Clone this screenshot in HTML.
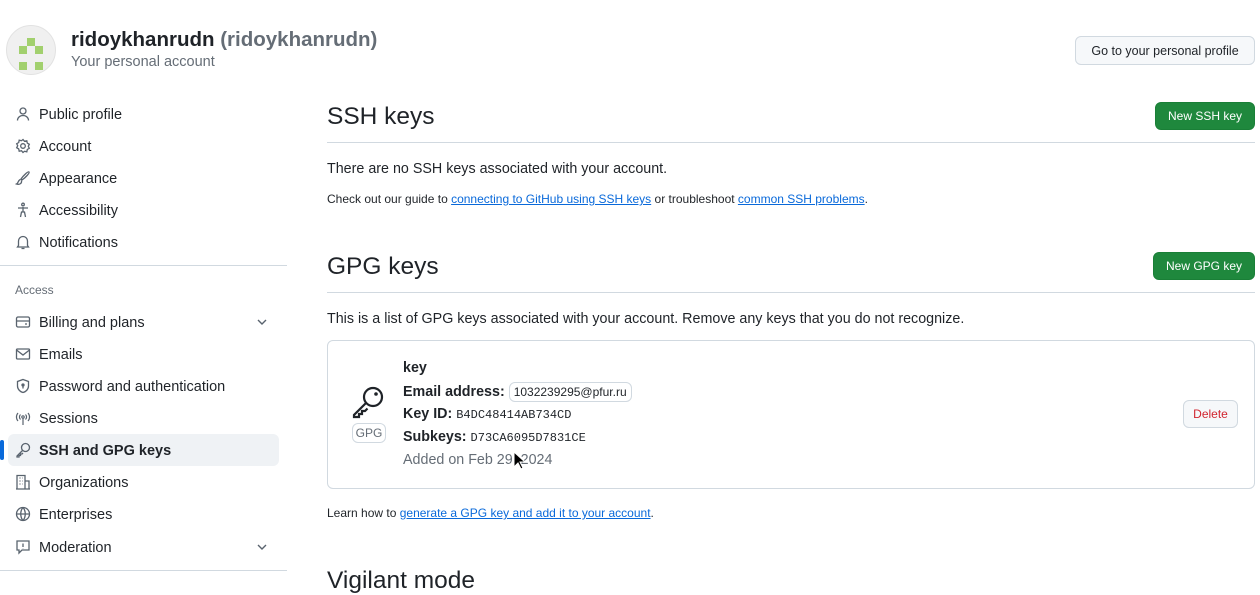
<!DOCTYPE html>
<html><head><meta charset="utf-8"><style>
*{box-sizing:border-box;margin:0;padding:0}
body{width:1260px;height:591px;overflow:hidden;background:#fff;font-family:"Liberation Sans",sans-serif;color:#1f2328;position:relative}
.a{position:absolute;white-space:nowrap}
.nav{position:absolute;left:8px;width:271px;height:32px;font-size:14.5px;display:flex;align-items:center;padding-left:31px;padding-top:1px;border-radius:6px}
.nav svg{position:absolute;left:7px;top:8px}
.nav svg.chev{left:auto;right:10px;top:9px}
a{color:#0969da;text-decoration:underline}
.btn{position:absolute;border-radius:6px;font-size:12px;display:flex;align-items:center;justify-content:center}
.green{background:#1f883d;color:#fff;border:1px solid #1a7f37}
h2{position:absolute;font-weight:400;font-size:24.5px;white-space:nowrap}
.hr{position:absolute;left:327px;width:928px;height:1px;background:#d1d9e0}
.mono{font-family:"Liberation Mono",monospace;font-size:12px;font-weight:400}
</style></head><body>
<div class="a" style="left:6px;top:25px;width:50px;height:50px;border-radius:50%;background:#f0f0f0;border:1px solid #e2e2e2">
<svg width="50" height="50" style="position:absolute;left:-1px;top:-1px"><g fill="#a2d06e"><rect x="21" y="13" width="8" height="8"/><rect x="13" y="21" width="8" height="8"/><rect x="29" y="21" width="8" height="8"/><rect x="13" y="37" width="8" height="8"/><rect x="29" y="37" width="8" height="8"/></g></svg></div>
<div class="a" style="left:71px;top:28px;font-size:20.5px;font-weight:700">ridoykhanrudn <span style="color:#656d76;font-weight:600">(ridoykhanrudn)</span></div>
<div class="a" style="left:71px;top:54px;font-size:14.5px;color:#656d76">Your personal account</div>
<div class="btn" style="left:1075px;top:36px;width:180px;height:29px;background:#f6f8fa;border:1px solid #d1d9e0;font-size:12.5px">Go to your personal profile</div>

<div class="nav" style="top:98px"><svg width="16" height="16" fill="none" stroke="#59636e" stroke-width="1.3"><circle cx="8" cy="5" r="3"/><path d="M2.5 14.5c0-3 2.5-5 5.5-5s5.5 2 5.5 5"/></svg>Public profile</div>
<div class="nav" style="top:130px"><svg width="16" height="16" fill="none" stroke="#59636e" stroke-width="1.3"><circle cx="8" cy="8" r="2.3"/><path d="M8 1.5l1.5 1.8 2.3-.5.5 2.3 2 1.2-1 2 1 2-2 1.2-.5 2.3-2.3-.5L8 14.5l-1.5-1.8-2.3.5-.5-2.3-2-1.2 1-2-1-2 2-1.2.5-2.3 2.3.5z"/></svg>Account</div>
<div class="nav" style="top:162px"><svg width="16" height="16" fill="none" stroke="#59636e" stroke-width="1.3"><path d="M14 2c-1-1-6 4-8 7l1 1c3-2 8-7 7-8zM5.5 9.5C3 10 3.5 13 1.5 14c3 1 5.5-.5 5-3.5"/></svg>Appearance</div>
<div class="nav" style="top:194px"><svg width="16" height="16" fill="none" stroke="#59636e" stroke-width="1.3"><circle cx="8" cy="2.5" r="1.3"/><path d="M3 6h10M8 5v5M5.5 15l1-5h3l1 5"/></svg>Accessibility</div>
<div class="nav" style="top:226px"><svg width="16" height="16" fill="none" stroke="#59636e" stroke-width="1.3"><path d="M3.5 11.5V7a4.5 4.5 0 019 0v4.5l1 1.5h-11zM6.5 14.5h3"/></svg>Notifications</div>
<div class="a" style="left:0;top:265px;width:287px;height:1px;background:#d1d9e0"></div>
<div class="a" style="left:15px;top:283px;font-size:12px;color:#656d76">Access</div>
<div class="nav" style="top:306px"><svg width="16" height="16" fill="none" stroke="#59636e" stroke-width="1.3"><rect x="1.5" y="3" width="13" height="10" rx="1.5"/><path d="M1.5 7h13M10 10h2"/></svg>Billing and plans<svg class="chev" width="14" height="14" fill="none" stroke="#59636e" stroke-width="1.4"><path d="M3 5l4 4 4-4"/></svg></div>
<div class="nav" style="top:338px"><svg width="16" height="16" fill="none" stroke="#59636e" stroke-width="1.3"><rect x="1.5" y="3" width="13" height="10" rx="1"/><path d="M1.5 4l6.5 5 6.5-5"/></svg>Emails</div>
<div class="nav" style="top:370px"><svg width="16" height="16" fill="none" stroke="#59636e" stroke-width="1.3"><path d="M8 1.5l5.5 2v4.5c0 3.5-3 6-5.5 6.5C5.5 14 2.5 11.5 2.5 8V3.5z"/><circle cx="8" cy="7" r="1" fill="#59636e"/><path d="M8 8v2.5"/></svg>Password and authentication</div>
<div class="nav" style="top:402px"><svg width="16" height="16" fill="none" stroke="#59636e" stroke-width="1.2"><circle cx="8" cy="7" r="1.2"/><path d="M8 8.5V15M5.5 4.5a3.5 3.5 0 000 5M10.5 4.5a3.5 3.5 0 010 5M3 3a6 6 0 000 8M13 3a6 6 0 010 8"/></svg>Sessions</div>
<div class="nav" style="top:434px;background:#eff2f5;font-weight:700"><svg width="16" height="16" fill="none" stroke="#59636e" stroke-width="1.3"><circle cx="10.5" cy="5.5" r="4"/><path d="M7.5 8.5L2 14v1h2v-1.5h1.5V12H7l1-1"/></svg>SSH and GPG keys</div>
<div class="a" style="left:0;top:440px;width:4px;height:20px;background:#0969da;border-radius:2px"></div>
<div class="nav" style="top:466px"><svg width="16" height="16" fill="none" stroke="#59636e" stroke-width="1.3"><path d="M2 15V1.5h8V15M10 7h4v8M1 15h14M4.5 4h1M7 4h.5M4.5 7h1M7 7h.5M4.5 10h1M7 10h.5"/></svg>Organizations</div>
<div class="nav" style="top:498px"><svg width="16" height="16" fill="none" stroke="#59636e" stroke-width="1.3"><circle cx="8" cy="8" r="6.5"/><path d="M1.5 8h13M8 1.5c-3 3.5-3 9.5 0 13M8 1.5c3 3.5 3 9.5 0 13"/></svg>Enterprises</div>
<div class="nav" style="top:531px"><svg width="16" height="16" fill="none" stroke="#59636e" stroke-width="1.3"><path d="M2 2h12v9H7l-3 3v-3H2z"/><path d="M8 4.5V8M8 9.3v.2"/></svg>Moderation<svg class="chev" width="14" height="14" fill="none" stroke="#59636e" stroke-width="1.4"><path d="M3 5l4 4 4-4"/></svg></div>
<div class="a" style="left:0;top:570px;width:287px;height:1px;background:#d1d9e0"></div>

<h2 style="left:327px;top:103px">SSH keys</h2>
<div class="btn green" style="left:1155px;top:102px;width:100px;height:28px">New SSH key</div>
<div class="hr" style="top:142px"></div>
<div class="a" style="left:327px;top:161px;font-size:14.3px">There are no SSH keys associated with your account.</div>
<div class="a" style="left:327px;top:192px;font-size:12px">Check out our guide to <a>connecting to GitHub using SSH keys</a> or troubleshoot <a>common SSH problems</a>.</div>

<h2 style="left:327px;top:253px">GPG keys</h2>
<div class="btn green" style="left:1153px;top:252px;width:102px;height:28px">New GPG key</div>
<div class="hr" style="top:292px"></div>
<div class="a" style="left:327px;top:311px;font-size:14.3px">This is a list of GPG keys associated with your account. Remove any keys that you do not recognize.</div>
<div class="a" style="left:327px;top:340px;width:928px;height:149px;border:1px solid #d1d9e0;border-radius:6px"></div>
<svg class="a" style="left:351px;top:385px" width="36" height="36" fill="none" stroke="#1f2328" stroke-width="2.2"><circle cx="22" cy="12" r="9"/><circle cx="25" cy="9" r="1.8" fill="#1f2328" stroke="none"/><path d="M15 18L3 30v2h5v-3h3v-3h3l2.5-2.5"/></svg>
<div class="a" style="left:352px;top:423px;width:34px;height:20px;border:1px solid #d1d9e0;border-radius:6px;font-size:12px;color:#656d76;text-align:center;line-height:18px">GPG</div>
<div class="a" style="left:403px;top:360px;font-size:14.3px;font-weight:700">key</div>
<div class="a" style="left:403px;top:382px;font-size:14.3px;font-weight:700">Email address: <span style="display:inline-block;font-weight:400;font-size:12px;border:1px solid #d1d9e0;border-radius:6px;padding:2px 4px">1032239295@pfur.ru</span></div>
<div class="a" style="left:403px;top:406px;font-size:14.3px;font-weight:700">Key ID: <span class="mono">B4DC48414AB734CD</span></div>
<div class="a" style="left:403px;top:429px;font-size:14.3px;font-weight:700">Subkeys: <span class="mono">D73CA6095D7831CE</span></div>
<div class="a" style="left:403px;top:452px;font-size:14.3px;color:#656d76">Added on Feb 29, 2024</div>
<div class="btn" style="left:1183px;top:400px;width:55px;height:28px;background:#f6f8fa;border:1px solid #d1d9e0;color:#d1242f">Delete</div>
<svg class="a" style="left:513px;top:451px" width="14" height="20"><path d="M1 1v15l4-4 3 6 2-1-3-6h5z" fill="#000" stroke="#fff" stroke-width="1"/></svg>
<div class="a" style="left:327px;top:506px;font-size:12px">Learn how to <a>generate a GPG key and add it to your account</a>.</div>
<h2 style="left:327px;top:567px">Vigilant mode</h2>
</body></html>
